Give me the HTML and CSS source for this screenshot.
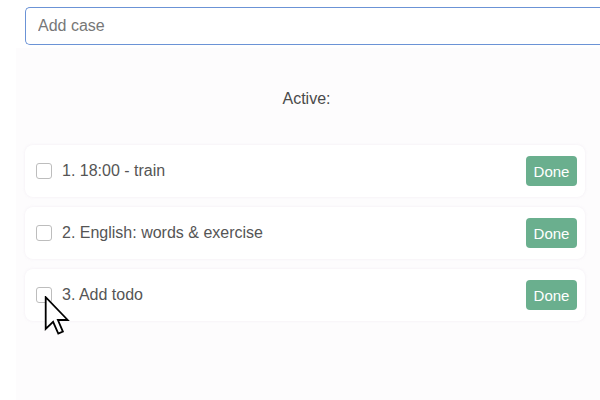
FILE: index.html
```html
<!DOCTYPE html>
<html>
<head>
<meta charset="utf-8">
<link rel="stylesheet" href="styles.css">
</head>
<body>
<div class="top">
  <input class="add" type="text" placeholder="Add case">
</div>
<div class="panel">
  <div class="title">Active:</div>
  <ul class="list">
    <li class="item"><span class="check"></span><span class="text">1. 18:00 - train</span><button class="done">Done</button></li>
    <li class="item"><span class="check"></span><span class="text">2. English: words &amp; exercise</span><button class="done">Done</button></li>
    <li class="item"><span class="check"></span><span class="text">3. Add todo</span><button class="done">Done</button></li>
  </ul>
</div>
<svg class="cursor" width="27" height="40" viewBox="0 0 13 20">
  <path d="M0.6 0.6 L0.6 16.4 L4.3 12.9 L6.9 18.8 L9.2 17.8 L6.7 12 L11.6 12 Z" fill="#fff" stroke="#000" stroke-width="0.9" stroke-linejoin="miter"/>
</svg>
</body>
</html>
```
FILE: styles.css
```css
html, body {
  margin: 0;
  padding: 0;
  width: 600px;
  height: 400px;
  overflow: hidden;
  background: #ffffff;
  font-family: "Liberation Sans", Arial, sans-serif;
}
.top {
  padding: 7px 0 0 25px;
  height: 48px;
  box-sizing: border-box;
}
.add {
  display: block;
  width: 575px;
  height: 38px;
  box-sizing: border-box;
  border: 1px solid #6b93d6;
  border-right: none;
  border-radius: 5px 0 0 5px;
  padding: 0 12px;
  font-family: "Liberation Sans", Arial, sans-serif;
  font-size: 16px;
  color: #555;
  outline: none;
  background: #fff;
}
.add::placeholder {
  color: #777;
}
.panel {
  margin-left: 16px;
  background: #fdfcfd;
  height: 352px;
  padding: 1px 0 0 9px;
  box-sizing: border-box;
}
.title {
  text-align: center;
  margin-top: 41px;
  padding-right: 12px;
  font-size: 16px;
  color: #4a4a4a;
  line-height: 18px;
}
.list {
  list-style: none;
  margin: 37px 0 0 0;
  padding: 0;
  width: 560px;
  display: flex;
  flex-direction: column;
  gap: 10px;
}
.item {
  display: flex;
  align-items: center;
  height: 52px;
  padding: 0 8px 0 11px;
  box-sizing: border-box;
  background: #fff;
  border-radius: 8px;
  box-shadow: 0 0 3px rgba(235, 228, 238, 0.6);
}
.check {
  width: 14px;
  height: 14px;
  border: 1px solid #bdbdbd;
  border-radius: 3px;
  background: #fff;
  margin-right: 10px;
}
.text {
  flex: 1;
  font-size: 16px;
  color: #555;
}
.done {
  width: 51px;
  height: 30px;
  border: none;
  border-radius: 4px;
  background: #6aaf8e;
  color: #fff;
  font-family: "Liberation Sans", Arial, sans-serif;
  font-size: 15px;
  padding: 0;
}
.cursor {
  position: absolute;
  left: 44px;
  top: 296px;
}
```
